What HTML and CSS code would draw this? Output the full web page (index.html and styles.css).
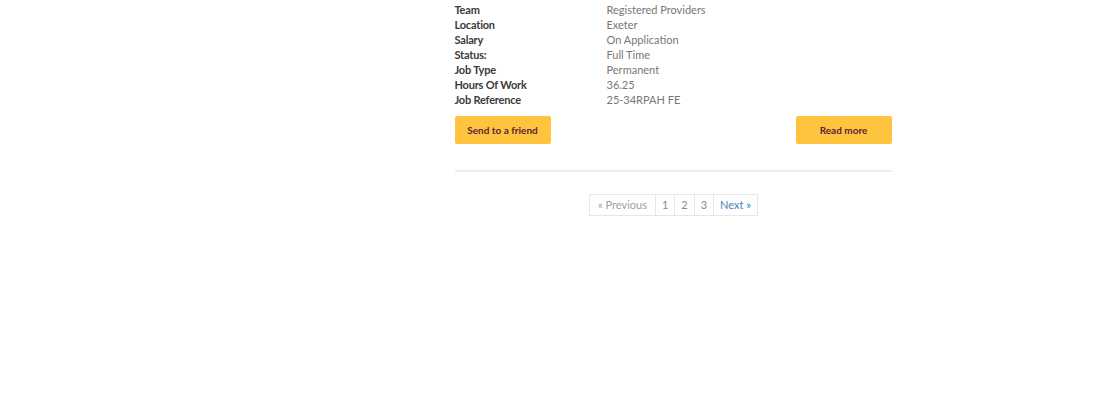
FILE: index.html
```html
<!DOCTYPE html>
<html lang="en">
<head>
    <meta charset="UTF-8">
    <title>Job listing</title>
    <link rel="stylesheet" href="styles.css">
</head>
<body>
    <div class="container">
        <div class="job">
            <table class="details">
                <tr><th>Team</th><td>Registered Providers</td></tr>
                <tr><th>Location</th><td>Exeter</td></tr>
                <tr><th>Salary</th><td>On Application</td></tr>
                <tr><th>Status:</th><td>Full Time</td></tr>
                <tr><th>Job Type</th><td>Permanent</td></tr>
                <tr><th>Hours Of Work</th><td>36.25</td></tr>
                <tr><th>Job Reference</th><td>25-34RPAH FE</td></tr>
            </table>
            <div class="actions">
                <a class="btn" href="#">Send to a friend</a>
                <a class="btn" href="#">Read more</a>
            </div>
        </div>
        <div class="pager">
            <span class="disabled">&laquo; Previous</span>
            <span class="current">1</span>
            <a href="#">2</a>
            <a href="#">3</a>
            <a class="next" href="#">Next &raquo;</a>
        </div>
    </div>
</body>
</html>
```

FILE: styles.css
```css
body {
    margin: 0;
    font-family: Lato, "Open Sans", sans-serif;
    font-size: 11px;
    color: #666;
    background: #fff;
}
.container {
    width: 437px;
    margin: 0 auto;
    padding-top: 2px;
    position: relative;
    left: 113px;
}
.job {
    border-bottom: 2px solid #eee;
    padding-bottom: 26px;
}
.details {
    border-collapse: collapse;
}
.details th, .details td {
    padding: 0;
    height: 15px;
    text-align: left;
    vertical-align: middle;
}
.details th {
    width: 152px;
    font-weight: bold;
    color: #3a3a3a;
    letter-spacing: -0.2px;
}
.details td {
    color: #777;
}
.actions {
    display: flex;
    justify-content: space-between;
    margin-top: 9px;
}
.btn {
    display: block;
    width: 96px;
    height: 28px;
    line-height: 28px;
    text-align: center;
    background: #fec43e;
    color: #5a2336;
    font-weight: bold;
    font-size: 10px;
    text-decoration: none;
    border-radius: 2px;
}
.pager {
    display: flex;
    justify-content: center;
    margin-top: 22px;
    padding-left: 2px;
}
.pager span, .pager a {
    display: block;
    height: 20px;
    line-height: 20px;
    padding: 0 6px;
    border: 1px solid #e6e6e6;
    margin-left: -1px;
    color: #888;
    text-decoration: none;
}
.pager .disabled {
    color: #a0a0a0;
    padding: 0 8px;
}
.pager .next {
    color: #4a7fb5;
}
```
